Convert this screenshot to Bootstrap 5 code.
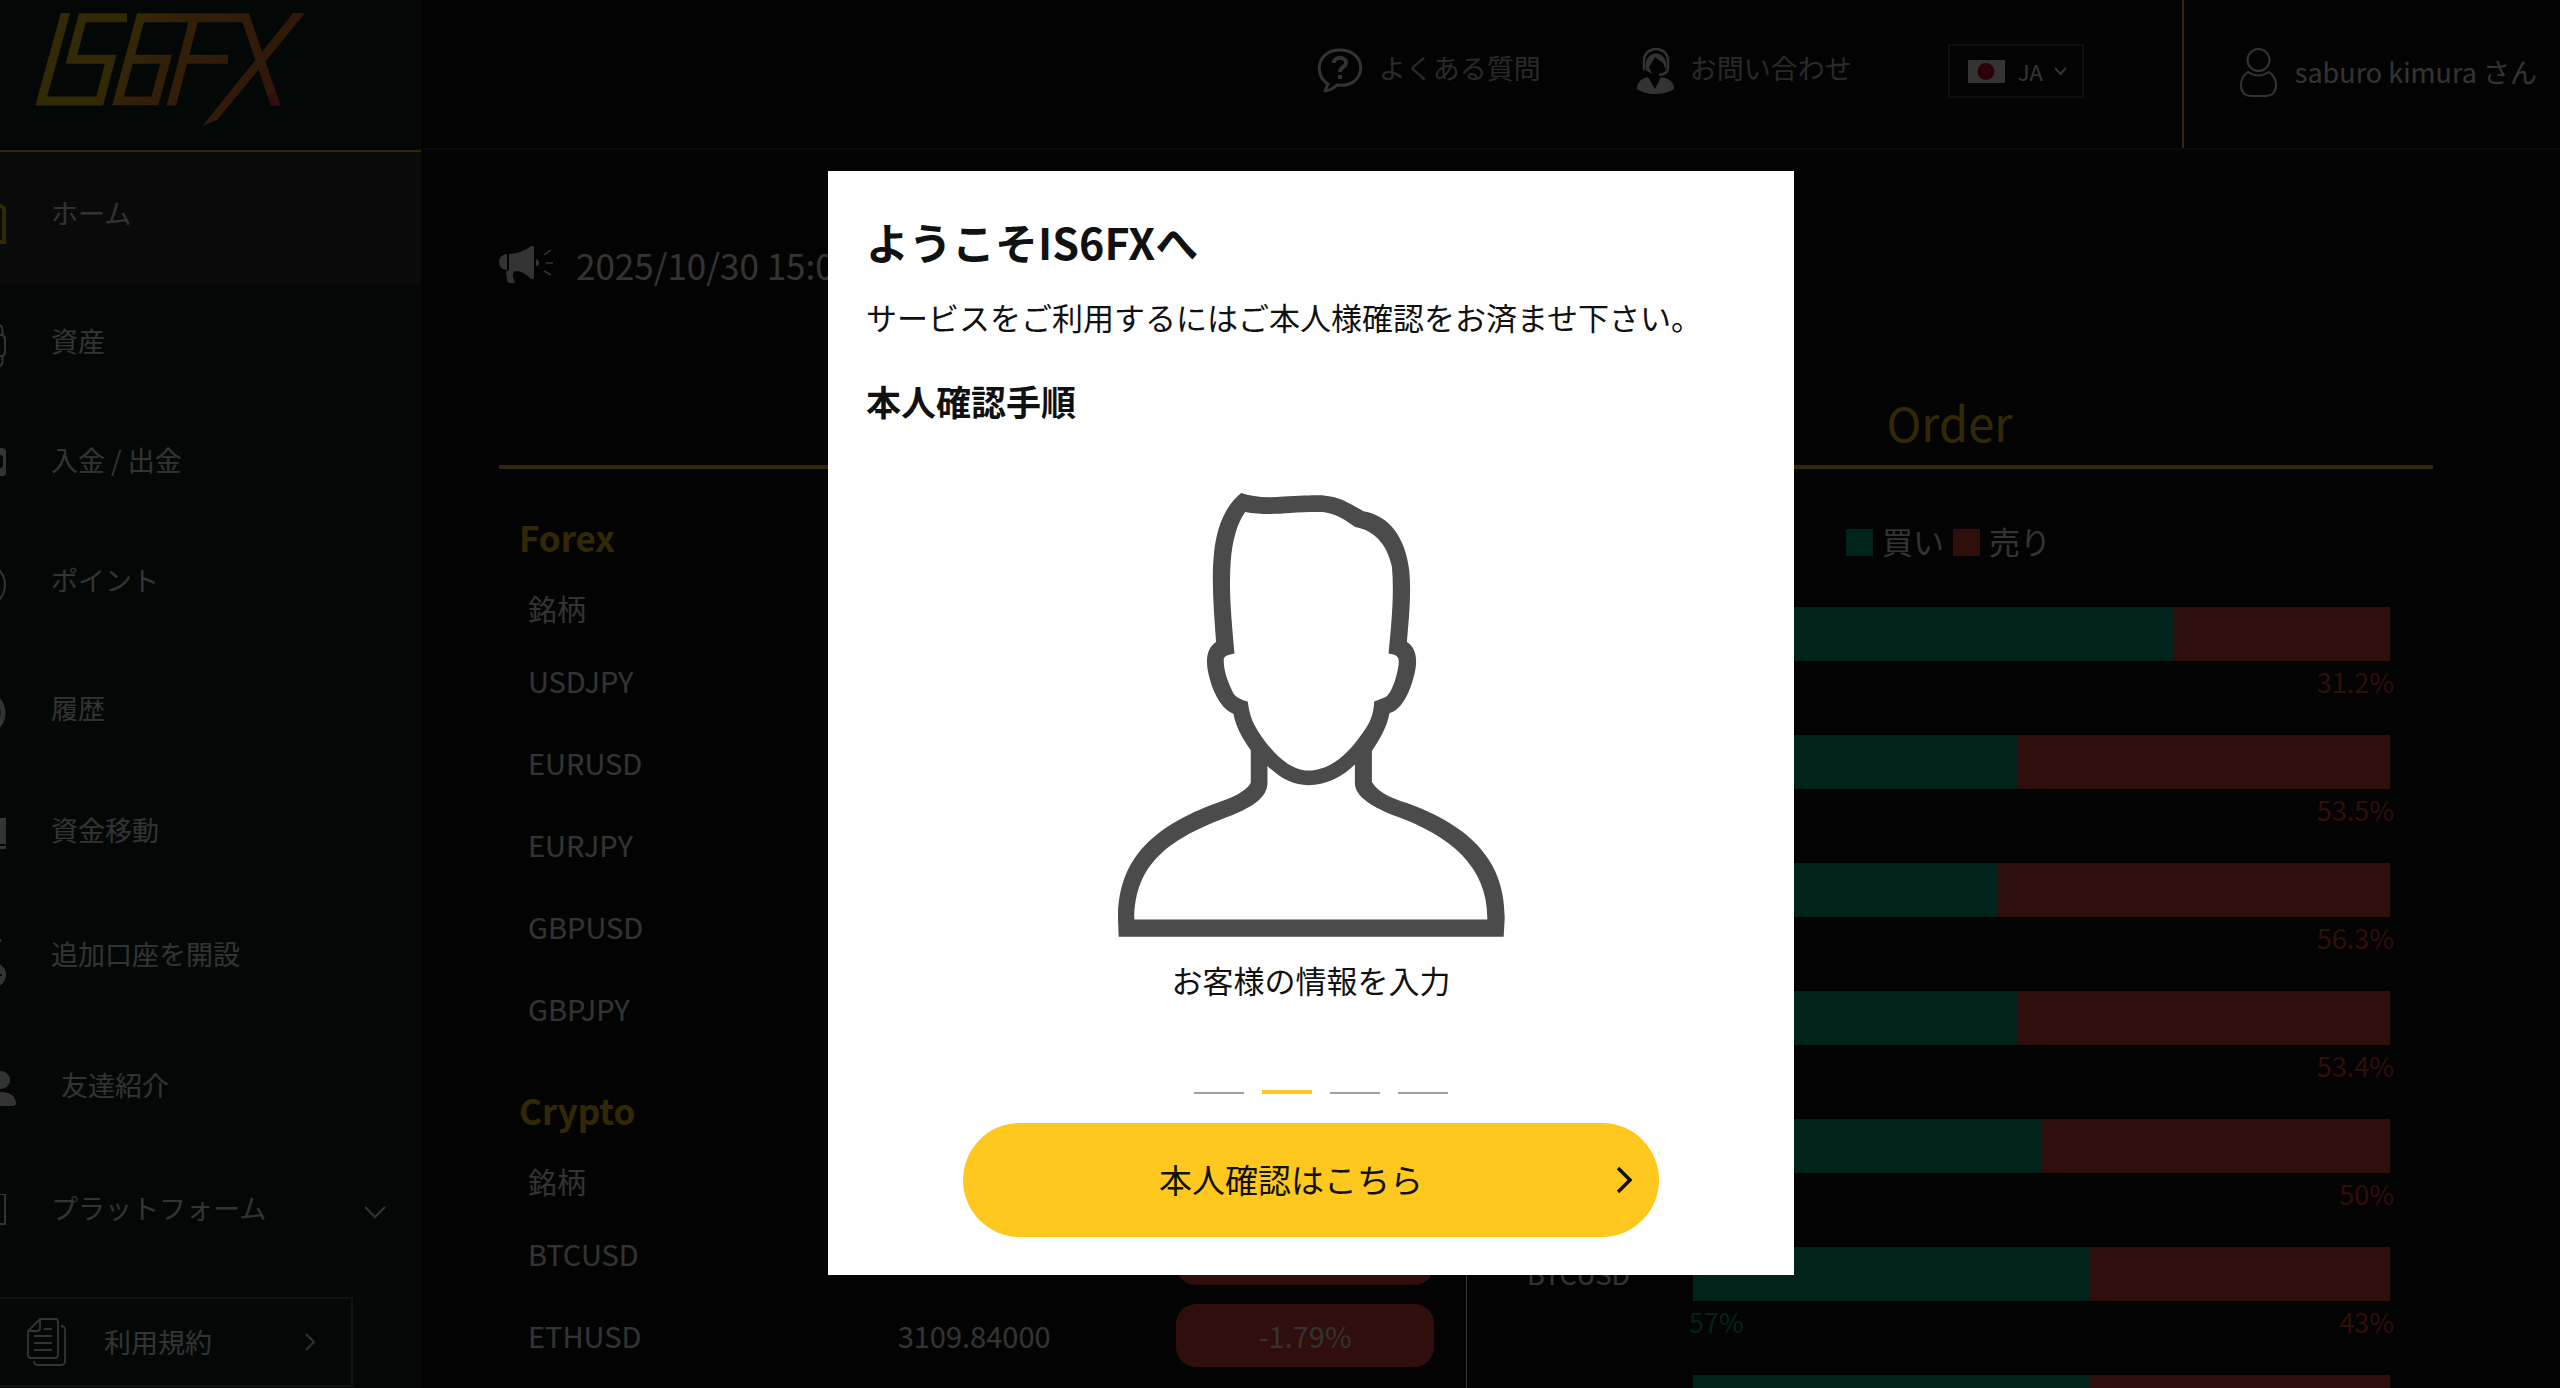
<!DOCTYPE html>
<html lang="ja">
<head>
<meta charset="utf-8">
<meta name="viewport" content="width=device-width, initial-scale=1">
<title>IS6FX</title>
<link href="https://cdn.jsdelivr.net/npm/bootstrap@5.3.0/dist/css/bootstrap.min.css" rel="stylesheet">
<style>
:root { --gold: #ffc81e; --buy: #00b487; --sell: #f04637; --ink: #fff; }
body { font-family: "Noto Sans CJK JP", "Noto Sans", sans-serif; background: #101010; color: var(--ink); font-size: 27px; line-height: 40px; height: 100vh; overflow: hidden; }
svg { display: block; flex: none; }
a { color: inherit; text-decoration: none; }

.side-panel { width: 421px; flex: none; background: #0f231e; }
.brand-box { height: 152px; padding: 13px 0 0 35px; border-bottom: 2px solid var(--gold); }
.side-link { display: flex; align-items: center; gap: 45px; padding: 40px 35px 40px 0; }
.side-link span { line-height: 24px; padding-bottom: 10px; }
.side-link.current { background: #323232; }
.terms-link { width: 353px; height: 90px; margin-top: 25px; padding: 0 36px 0 27px; border: 2px solid #5c5454; border-left: 0; display: flex; align-items: center; }
.terms-link span { margin-left: 38px; }

.top-bar { height: 150px; border-bottom: 2px solid #323232; }
.top-tools { padding-bottom: 6px; }
.top-bar .help-link { color: #ccc; margin-right: 96px; }
.top-bar .help-link span { padding-bottom: 6px; }
.lang-box { width: 136px; height: 54px; border: 2px solid #484848; padding-left: 18px; margin-right: 98px; }
.lang-box select { appearance: none; background: transparent; color: #fff; border: 0; padding: 0; width: 36px; margin-left: 13px; font-size: 22px; line-height: 32px; }
.user-box { border-left: 2px solid var(--gold); padding: 0 23px 4px 56px; gap: 18px; }

.board { padding: 89px 127px 0 78px; }
.news-line { font-size: 35px; line-height: 52px; gap: 23px; margin-bottom: 101px; }
.board-heads { border-bottom: 4px solid var(--gold); color: var(--gold); padding-bottom: 13px; }
.board-heads h2 { font-size: 47px; line-height: 60px; font-weight: 400; margin: 0; }
.rate-col { padding: 28px 20px 0; }
.rate-col h3 { font-size: 35px; line-height: 80px; font-weight: 700; color: var(--gold); margin: 0; }
.rate-table { --bs-table-bg: transparent; --bs-table-color: #fff; color: #fff; table-layout: fixed; font-size: 29px; border-color: transparent; margin-bottom: 20px; }
.rate-table th, .rate-table td { padding: 0 0 2px 9px; border: 0; font-weight: 400; vertical-align: middle; height: 82px; }
.rate-table thead th { height: 63px; }
.rate-table td + td { padding: 0 0 2px; text-align: center; }
.drop-pill { display: block; height: 63px; line-height: 63px; margin: 0 12px; border-radius: 20px; background: var(--sell); }
.order-col { border-left: 1px solid #fff; padding: 52px 43px 0 60px; }
.legend-line { font-size: 31px; line-height: 40px; gap: 9px; margin-bottom: 46px; padding-right: 20px; }
.legend-line i { width: 27px; height: 27px; display: inline-block; margin-top: 8px; }
.order-item { display: flex; align-items: flex-start; margin-bottom: 34px; }
.order-name { width: 166px; flex: none; line-height: 54px; }
.order-bar { height: 54px; display: flex; background: var(--sell); }
.order-bar div { background: var(--buy); }
.order-share { display: flex; line-height: 38px; margin: 2px -4px 0; height: 38px; }
.bg-buy { background: var(--buy); } .bg-sell { background: var(--sell); }
.text-buy { color: var(--buy); } .text-sell { color: var(--sell); }

.modal-backdrop.show { opacity: .8; }
.modal { padding-left: 62px; overflow: hidden; }
.welcome { max-width: 966px; margin-top: 171px; }
.welcome .modal-content { border: 0; border-radius: 0; background: #fff; color: #111; padding: 40px 38px 38px; }
.welcome h1 { font-size: 43px; line-height: 60px; font-weight: 700; margin: 0 0 22px; }
.welcome p { font-size: 31px; line-height: 48px; margin: 0 0 34px; }
.welcome h2 { font-size: 35px; line-height: 52px; font-weight: 700; margin: 0 0 66px; }
.welcome figcaption { font-size: 31px; line-height: 46px; margin-top: 20px; }
.welcome figure { margin: 0 0 87px; }
.step-marks { gap: 18px; height: 4px; margin-bottom: 29px; padding-left: 20px; }
.step-marks button { width: 50px; height: 2px; border: 0; padding: 0; background: #a0a0a0; }
.step-marks .active { height: 4px; background: var(--gold); }
.go-btn { width: 696px; height: 114px; border-radius: 57px; border: 0; background: var(--gold); color: #111; font-size: 33px; padding: 0 27px; gap: 24px; }
.go-btn:hover { background: #f5bd10; }
.go-btn span { padding-bottom: 2px; }
</style>
</head>
<body>
<div class="d-flex h-100 overflow-hidden">
  <aside class="side-panel">
    <div class="brand-box">
      <a href="#" aria-label="IS6FX">
        <svg width="271" height="113" viewBox="105 40 812 340" fill="none" stroke="url(#lg)" stroke-width="27" stroke-miterlimit="10">
          <defs>
            <linearGradient id="lg" gradientUnits="userSpaceOnUse" x1="380" y1="120" x2="760" y2="330"><stop offset="0" stop-color="#ffcb1e"/><stop offset=".25" stop-color="#fa9f2b"/><stop offset="1" stop-color="#f07832"/></linearGradient>
            <clipPath id="base"><path d="M105 40H920V318H105z"/></clipPath>
          </defs>
          <path d="M198 30L122 305H298L331 179H213L246 54H380"/>
          <path clip-path="url(#base)" d="M393 179H498L464 305H353L421 54H737L832 332M583 54L510 332M560 179H684"/>
          <path fill="url(#lg)" stroke="none" d="M880 40H916L652 361L607 380z"/>
          <path fill="#f04637" stroke="none" d="M803 286L829 276L842 318H813z"/>
        </svg>
      </a>
    </div>
    <nav>
      <a class="side-link current" href="#"><svg width="6" height="52" viewBox="0 0 6 52"><path d="M-4 11L4 16V50H-4" fill="none" stroke="#ffc81e" stroke-width="4"/></svg><span>ホーム</span></a>
      <a class="side-link" href="#"><svg width="6" height="44" viewBox="0 0 6 44" fill="none" stroke="#fff" stroke-width="2"><path d="M-2 1Q3 1 2.500 8V11Q5 12 5 16V28Q5 31 2.500 32V36Q3 42-2 43M-2 11H3M-2 32H3"/></svg><span>資産</span></a>
      <a class="side-link" href="#"><svg width="6" height="34" viewBox="0 0 6 34"><path fill="#fff" fill-rule="evenodd" d="M-9 0H2Q6 0 6 4V24Q6 28 2 28H-9zM-4 6V20H0Q3 20 3 17V10Q3 7 0 7z"/></svg><span>入金 / 出金</span></a>
      <a class="side-link" href="#"><svg width="6" height="46" viewBox="0 0 6 46"><circle cx="-17" cy="23" r="22" fill="none" stroke="#fff" stroke-width="2"/></svg><span>ポイント</span></a>
      <a class="side-link" href="#"><svg width="6" height="50" viewBox="0 0 6 50"><circle cx="-17" cy="25" r="20" fill="none" stroke="#fff" stroke-width="5"/></svg><span>履歴</span></a>
      <a class="side-link" href="#"><svg width="6" height="34" viewBox="0 0 6 34" fill="#fff"><path d="M-2 0H6V26H-2zM-2 28H6V31H-2z"/></svg><span>資金移動</span></a>
      <a class="side-link" href="#"><svg width="6" height="54" viewBox="0 0 6 54" fill="#fff"><path d="M-2 7H1Q2 10-2 12z"/><circle cx="-6" cy="43" r="12"/><path d="M-6 42H2V44H-6z" fill="#0f231e"/></svg><span>追加口座を開設</span></a>
      <a class="side-link" href="#"><svg width="16" height="48" viewBox="0 0 16 48" fill="#fff"><circle cx="1" cy="14" r="9"/><path d="M-12 40V36Q-10 26 0 26Q15 26 16 37Q16 40 12 40z"/></svg><span>友達紹介</span></a>
      <a class="side-link" href="#"><svg width="6" height="38" viewBox="0 0 6 38"><path d="M-4 0H4Q5 0 5 1V30H-4" fill="none" stroke="#fff" stroke-width="2"/></svg><span>プラットフォーム</span><svg class="ms-auto" width="22" height="14" viewBox="0 0 22 14"><path d="M1 1L11 11L21 1" fill="none" stroke="#fff" stroke-width="2"/></svg></a>
    </nav>
    <a class="terms-link" href="#">
      <svg width="39" height="48" viewBox="0 0 39 48" fill="none" stroke="#fff" stroke-width="1.800"><path d="M13 1H29Q31 1 31 4V37Q31 40 28 40H4Q1 40 1 37V13zM13 1V10Q13 13 10 13H1M34 8Q38 8 38 12V43Q38 47 34 47H11Q7 47 7 43M17 11H25M7 18H25M7 25H25M7 32H25"/></svg>
      <span>利用規約</span>
      <svg class="ms-auto" width="10" height="18" viewBox="0 0 10 18"><path d="M1 1L9 9L1 17" fill="none" stroke="#fff" stroke-width="1.800"/></svg>
    </a>
  </aside>

  <div class="flex-grow-1">
    <header class="top-bar d-flex justify-content-end">
      <div class="top-tools d-flex align-items-center">
        <a class="help-link d-flex align-items-center gap-3" href="#">
          <svg width="46" height="46" viewBox="0 0 46 46" fill="none" stroke="#fff" stroke-width="3"><path d="M8 43L11 36C-3 28-1 2 23 2C52 2 50 41 20 37Q15 42 8 43z" stroke-linejoin="round"/><path d="M17 15C17 8 29 8 29 15C29 19 23 19 23 24M23 27V31" stroke-width="4"/></svg>
          <span>よくある質問</span>
        </a>
        <a class="help-link d-flex align-items-center gap-3" href="#">
          <svg width="37" height="46" viewBox="0 0 37 46"><path d="M7 22V13C7-3 31-3 31 13V20Q31 26 22 27" fill="none" stroke="#fff" stroke-width="2.500"/><path fill="#fff" d="M9 22C5 0 33 0 29 22L26 15L18 9Q14 16 12 19L15 26zM0 41Q0 31 11 29L18 41L24 29Q37 31 37 41Q30 46 18 46Q7 46 0 41z"/></svg>
          <span>お問い合わせ</span>
        </a>
        <div class="lang-box d-flex align-items-center">
          <svg width="37" height="23" viewBox="0 0 37 23"><path fill="#fff" d="M0 0H37V23H0z"/><circle cx="18" cy="11.500" r="8.500" fill="#d80027"/></svg>
          <select aria-label="言語"><option>JA</option></select>
          <svg width="13" height="9" viewBox="0 0 13 9"><path d="M1 1L6.500 7L12 1" fill="none" stroke="#fff" stroke-width="2"/></svg>
        </div>
      </div>
      <a class="user-box d-flex align-items-center" href="#">
        <svg width="37" height="49" viewBox="0 0 37 49" fill="none" stroke="#fff" stroke-width="2"><ellipse cx="18.500" cy="12" rx="11" ry="11"/><path d="M8 24Q1 29 1 37C1 44 5 48 12 48H25C32 48 36 44 36 37Q36 29 29 24Q18 31 8 24z"/></svg>
        <span>saburo kimura さん</span>
      </a>
    </header>

    <main class="board">
      <div class="news-line d-flex align-items-center">
        <svg width="54" height="38" viewBox="0 0 54 38" fill="#fff"><path d="M8 8V24Q0 23 0 16T8 8zM10 8Q24 7 32 0Q35 -1 35 2V31Q35 34 32 33Q24 25 17 25Q13 26 14 31L16 37H10Q8 36 8 33L7 26L10 24z"/><path d="M37 13Q40 14 40 17T37 20z"/><path d="M45 9L52 4M47 17H54M45 25L52 29" stroke="#fff" stroke-width="1.500"/></svg>
        <span>2025/10/30 15:00</span>
      </div>
      <div class="row g-0 board-heads text-center">
        <div class="col-6 offset-6"><h2>Order</h2></div>
      </div>
      <div class="row g-0">
        <section class="col-6 rate-col">
          <h3>Forex</h3>
          <table class="table rate-table">
            <thead><tr><th scope="col">銘柄</th></tr></thead>
            <tbody>
              <tr><td>USDJPY</td></tr>
              <tr><td>EURUSD</td></tr>
              <tr><td>EURJPY</td></tr>
              <tr><td>GBPUSD</td></tr>
              <tr><td>GBPJPY</td></tr>
            </tbody>
          </table>
          <h3>Crypto</h3>
          <table class="table rate-table">
            <colgroup><col style="width:28.6%"><col style="width:41%"><col style="width:30.4%"></colgroup>
            <thead><tr><th scope="col" colspan="3">銘柄</th></tr></thead>
            <tbody>
              <tr><td>BTCUSD</td><td></td><td><span class="drop-pill"></span></td></tr>
              <tr><td>ETHUSD</td><td>3109.84000</td><td><span class="drop-pill">-1.79%</span></td></tr>
            </tbody>
          </table>
        </section>
        <section class="col-6 order-col">
          <div class="legend-line d-flex justify-content-center">
            <i class="bg-buy"></i><span>買い</span><i class="bg-sell"></i><span>売り</span>
          </div>
          <div class="order-item"><div class="order-name"></div><div class="flex-grow-1"><div class="order-bar"><div style="width:68.8%"></div></div><div class="order-share"><span class="text-sell ms-auto">31.2%</span></div></div></div>
          <div class="order-item"><div class="order-name"></div><div class="flex-grow-1"><div class="order-bar"><div style="width:46.5%"></div></div><div class="order-share"><span class="text-sell ms-auto">53.5%</span></div></div></div>
          <div class="order-item"><div class="order-name"></div><div class="flex-grow-1"><div class="order-bar"><div style="width:43.7%"></div></div><div class="order-share"><span class="text-sell ms-auto">56.3%</span></div></div></div>
          <div class="order-item"><div class="order-name"></div><div class="flex-grow-1"><div class="order-bar"><div style="width:46.6%"></div></div><div class="order-share"><span class="text-sell ms-auto">53.4%</span></div></div></div>
          <div class="order-item"><div class="order-name"></div><div class="flex-grow-1"><div class="order-bar"><div style="width:50%"></div></div><div class="order-share"><span class="text-sell ms-auto">50%</span></div></div></div>
          <div class="order-item"><div class="order-name">BTCUSD</div><div class="flex-grow-1"><div class="order-bar"><div style="width:57%"></div></div><div class="order-share"><span class="text-buy">57%</span><span class="text-sell ms-auto">43%</span></div></div></div>
          <div class="order-item"><div class="order-name"></div><div class="flex-grow-1"><div class="order-bar"><div style="width:57%"></div></div></div></div>
        </section>
      </div>
    </main>
  </div>
</div>

<div class="modal-backdrop show"></div>
<div class="modal show d-block" role="dialog" aria-modal="true" aria-labelledby="welcomeTitle">
  <div class="modal-dialog mb-0 welcome">
    <div class="modal-content">
      <h1 id="welcomeTitle">ようこそIS6FXへ</h1>
      <p>サービスをご利用するにはご本人様確認をお済ませ下さい。</p>
      <h2>本人確認手順</h2>
      <figure class="text-center">
        <svg class="mx-auto" width="387" height="444" viewBox="84 94 1160 1243" preserveAspectRatio="none"><path fill="#4b4b4b" fill-rule="evenodd" d="M453 94Q500 110 580 104C640 101 690 100 700 101C750 104 780 125 820 145C900 158 945 220 957 310C964 380 955 450 950 511C975 525 982 555 975 590C962 650 935 700 898 710C890 750 868 785 845 816V903C865 935 910 950 950 962C1120 1020 1245 1110 1243 1285L1240 1336H86L84 1285C84 1110 200 1020 400 955C440 942 470 925 482 905V814C460 785 437 750 430 712C395 700 365 650 353 590C346 550 355 525 378 511C372 430 363 340 372 260C380 190 405 130 453 94ZM465 147C510 155 560 153 600 150C640 148 690 146 710 149C745 155 765 170 795 189C850 198 890 235 905 300C912 370 905 450 895 543C920 546 928 552 925 575C918 620 900 660 885 666L852 678C850 715 840 740 810 775C765 835 710 871 655 871C600 871 550 825 510 770C490 742 478 720 473 678C455 672 440 668 430 655C412 620 400 590 401 560C402 550 415 546 433 543C425 450 415 370 422 285C426 230 440 180 465 147ZM133 1288C133 1130 240 1060 420 998C490 972 532 945 532 905V858C570 893 610 912 655 912C705 912 755 890 794 854V905C794 945 850 975 920 1000C1080 1055 1193 1140 1191 1288Z"/></svg>
        <figcaption>お客様の情報を入力</figcaption>
      </figure>
      <div class="step-marks d-flex justify-content-center align-items-end">
        <button type="button" aria-label="1"></button><button type="button" class="active" aria-label="2"></button><button type="button" aria-label="3"></button><button type="button" aria-label="4"></button>
      </div>
      <button type="button" class="go-btn d-flex align-items-center mx-auto">
        <span class="flex-grow-1">本人確認はこちら</span>
        <svg width="16" height="26" viewBox="0 0 16 26"><path d="M2 1L14 13L2 25" fill="none" stroke="#111" stroke-width="3.500"/></svg>
      </button>
    </div>
  </div>
</div>
<script src="https://cdn.jsdelivr.net/npm/bootstrap@5.3.0/dist/js/bootstrap.bundle.min.js"></script>
</body>
</html>
